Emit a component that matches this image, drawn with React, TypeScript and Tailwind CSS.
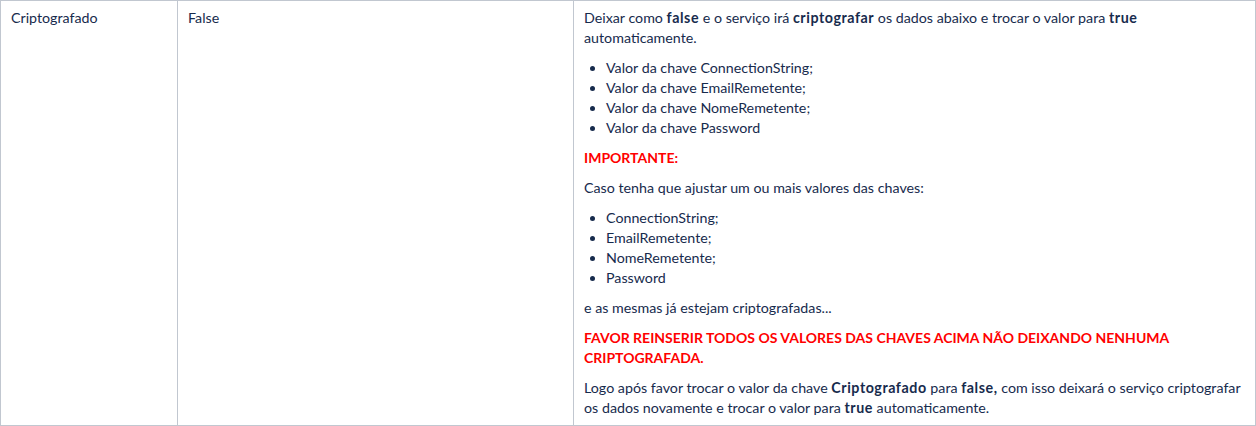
const bold = "font-bold tracking-[0.55px]";
const alert = "mt-[10px] text-[14px] font-bold text-[#ff0000]";

function Bullets({ items }: { items: string[] }) {
  return (
    <ul className="mt-[10px] list-disc pl-[22px]">
      {items.map((item) => (
        <li key={item}>{item}</li>
      ))}
    </ul>
  );
}

export default function App() {
  return (
    <div
      className="bg-white text-[14.25px] leading-[20px] text-[#172b4d]"
      style={{ fontFamily: "Lato, 'Noto Sans', sans-serif" }}
    >
      <div className="grid w-[1256px] grid-cols-[177px_396px_682px] border-l border-t border-[#c1c7d0]">
        {/* Key */}
        <div className="border-b border-r border-[#c1c7d0] px-[10px] pb-[7px] pt-[7px]">
          Criptografado
        </div>

        {/* Default value */}
        <div className="border-b border-r border-[#c1c7d0] px-[10px] pb-[7px] pt-[7px]">
          False
        </div>

        {/* Description */}
        <div className="border-b border-r border-[#c1c7d0] px-[10px] pb-[7px] pt-[7px]">
          <p>
            Deixar como <span className={bold}>false</span> e o serviço irá{" "}
            <span className={bold}>criptografar</span> os dados abaixo e trocar o valor para{" "}
            <span className={bold}>true</span> automaticamente.
          </p>
          <Bullets
            items={[
              "Valor da chave ConnectionString;",
              "Valor da chave EmailRemetente;",
              "Valor da chave NomeRemetente;",
              "Valor da chave Password",
            ]}
          />
          <p className={alert}>IMPORTANTE:</p>
          <p className="mt-[10px]">Caso tenha que ajustar um ou mais valores das chaves:</p>
          <Bullets items={["ConnectionString;", "EmailRemetente;", "NomeRemetente;", "Password"]} />
          <p className="mt-[10px]">e as mesmas já estejam criptografadas...</p>
          <p className={alert}>
            FAVOR REINSERIR TODOS OS VALORES DAS CHAVES ACIMA NÃO DEIXANDO NENHUMA CRIPTOGRAFADA.
          </p>
          <p className="mt-[10px]">
            Logo após favor trocar o valor da chave <span className={bold}>Criptografado</span> para{" "}
            <span className={bold}>false,</span> com isso deixará o serviço criptografar os dados
            novamente e trocar o valor para <span className={bold}>true</span> automaticamente.
          </p>
        </div>
      </div>
    </div>
  );
}
